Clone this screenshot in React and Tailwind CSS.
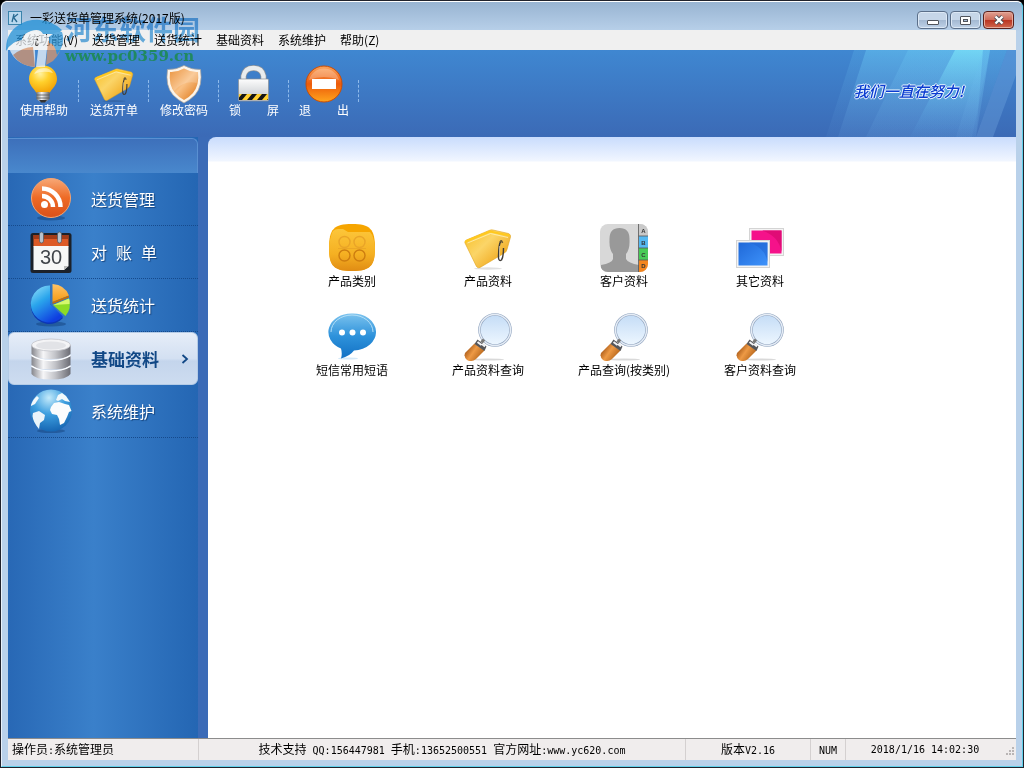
import { useState } from 'react';

const TagIcon = ({ className }) => (
  <svg viewBox="0 0 48 48" className={className} aria-hidden="true">
    <defs>
      <linearGradient id="tagFill" x1="0.1" y1="0.2" x2="0.9" y2="0.9">
        <stop offset="0" stopColor="#f9c63a" />
        <stop offset="0.35" stopColor="#fbd568" />
        <stop offset="1" stopColor="#ee9f0e" />
      </linearGradient>
    </defs>
    <ellipse cx="24" cy="44.5" rx="14" ry="1.2" fill="#000" opacity="0.12" />
    <path d="M1 19 Q0.500 17 2.500 16 L25 6.500 Q27 5.500 29 6 L44.500 9.500 Q47 10.500 46.500 13 L43 25.500 Q42.500 27.500 40.500 29 L16 43.500 Q14 44.500 12.500 42.500 Z" fill="url(#tagFill)" stroke="#e0a21a" strokeWidth="0.6" />
    <path d="M1.500 18.500 Q1.500 17 3.500 16.500 L26 7.500 L45.500 11.500" fill="none" stroke="#ffc91e" strokeWidth="2" />
    <path d="M3.500 19 L26.500 9.500 L44 13.500" fill="none" stroke="#fff2b8" strokeWidth="0.8" />
    <path d="M37 17 Q34.500 20 34.500 34 Q35 37.500 37.500 36 Q39.500 33 39.500 24" fill="none" stroke="#3f3c38" strokeWidth="1.4" />
    <path d="M36 18 Q37.500 15 38.500 19" fill="none" stroke="#6b5a35" strokeWidth="1.6" />
    <path d="M35.500 22 L35.500 32" stroke="#d8d2c0" strokeWidth="0.7" />
  </svg>
);

const BulbIcon = () => (
  <svg viewBox="0 0 40 40" className="size-10" aria-hidden="true">
    <defs>
      <radialGradient id="bulbGlass" cx="0.4" cy="0.3" r="0.7">
        <stop offset="0" stopColor="#fff2a0" />
        <stop offset="0.45" stopColor="#ffd02c" />
        <stop offset="1" stopColor="#f3a408" />
      </radialGradient>
      <linearGradient id="bulbBase" x1="0" x2="1">
        <stop offset="0" stopColor="#777" />
        <stop offset="0.4" stopColor="#f5f5f5" />
        <stop offset="1" stopColor="#666" />
      </linearGradient>
    </defs>
    <path d="M19 1.500 C10.500 1.500 5 7.500 5 15 C5 21 9.500 24 12.500 29 L25.500 29 C28.500 24 33 21 33 15 C33 7.500 27.500 1.500 19 1.500Z" fill="url(#bulbGlass)" />
    <path d="M10 10 Q13 4 20 4 Q26 4 29 9 Q19 6 10 10Z" fill="#fff" opacity="0.5" />
    <path d="M12.500 28 H25.500 V35 Q23 38 19 38 Q15 38 12.500 35Z" fill="url(#bulbBase)" />
    <path d="M12.500 31 H25.500 M12.500 34 H25.500" stroke="#555" strokeWidth="0.8" />
    <path d="M15 36 H23 L21 38.500 H17Z" fill="#333" />
  </svg>
);

const ShieldIcon = () => (
  <svg viewBox="0 0 40 40" className="size-10" aria-hidden="true">
    <defs>
      <linearGradient id="shieldFill" x1="0" y1="0" x2="1" y2="1">
        <stop offset="0" stopColor="#e67d16" />
        <stop offset="0.5" stopColor="#f9c084" />
        <stop offset="1" stopColor="#dc7210" />
      </linearGradient>
    </defs>
    <path d="M20 1.500 Q28 6 36.500 5.500 Q39 22 31 31 Q26 36 20 39 Q14 36 9 31 Q1 22 3.500 5.500 Q12 6 20 1.500Z" fill="#fbf4ea" stroke="#aaa299" strokeWidth="0.7" />
    <path d="M20 4.500 Q27 8.500 34 8 Q35.500 21 29 29 Q25 33.500 20 36 Q15 33.500 11 29 Q4.500 21 6 8 Q13 8.500 20 4.500Z" fill="url(#shieldFill)" />
    <path d="M20 4.500 Q27 8.500 34 8 Q34.500 14 32.500 19 Q20 16 10 27 Q5 20 6 8 Q13 8.500 20 4.500Z" fill="#fff" opacity="0.18" />
  </svg>
);

const LockIcon = () => (
  <svg viewBox="0 0 40 40" className="size-10" aria-hidden="true">
    <defs>
      <linearGradient id="lockBody" x1="0" y1="0" x2="0" y2="1">
        <stop offset="0" stopColor="#fdfdfd" />
        <stop offset="1" stopColor="#bfc3c8" />
      </linearGradient>
      <clipPath id="lockStrip">
        <rect x="5" y="30" width="29" height="6" />
      </clipPath>
    </defs>
    <path d="M9.500 17 V12 Q11 4 19.500 4 Q28 4 29.500 12 V17" fill="none" stroke="#8d9298" strokeWidth="6" />
    <path d="M9.500 17 V12 Q11 4 19.500 4 Q28 4 29.500 12 V17" fill="none" stroke="#e9ecee" strokeWidth="4.500" />
    <rect x="4.500" y="15" width="30" height="22" rx="1" fill="url(#lockBody)" stroke="#8a8f95" strokeWidth="0.7" />
    <g clipPath="url(#lockStrip)">
      <rect x="5" y="30" width="29" height="6" fill="#ffcf2e" />
      <path d="M3 36 L8 30 H13 L8 36Z M13 36 L18 30 H23 L18 36Z M23 36 L28 30 H33 L28 36Z M33 36 L38 30 V36Z" fill="#161616" />
    </g>
  </svg>
);

const ExitIcon = () => (
  <svg viewBox="0 0 40 40" className="size-10" aria-hidden="true">
    <defs>
      <linearGradient id="exitFill" x1="0" y1="0" x2="0" y2="1">
        <stop offset="0" stopColor="#fba45c" />
        <stop offset="0.5" stopColor="#ec5a0a" />
        <stop offset="1" stopColor="#ffa51e" />
      </linearGradient>
    </defs>
    <circle cx="20" cy="20" r="18" fill="url(#exitFill)" stroke="#c94c05" strokeWidth="1" />
    <path d="M5 16 A15.500 15.500 0 0 1 35 16 Q20 10 5 16Z" fill="#fff" opacity="0.25" />
    <rect x="8" y="15" width="24" height="10" fill="#fff" />
  </svg>
);

const RssIcon = () => (
  <svg viewBox="0 0 44 44" className="size-11" aria-hidden="true">
    <defs>
      <linearGradient id="rssFill" x1="0" y1="0" x2="0" y2="1">
        <stop offset="0" stopColor="#f7a876" />
        <stop offset="0.5" stopColor="#ee6a25" />
        <stop offset="1" stopColor="#d9501a" />
      </linearGradient>
    </defs>
    <ellipse cx="22" cy="41" rx="14" ry="2.500" fill="#0c3468" opacity="0.4" />
    <circle cx="22" cy="21" r="19.500" fill="url(#rssFill)" stroke="#f6a470" strokeWidth="1" />
    <circle cx="15.500" cy="27.500" r="3.500" fill="#fff" />
    <path d="M13 19 A11 11 0 0 1 24 30 M13 11.500 A18.500 18.500 0 0 1 31.500 30" fill="none" stroke="#fff" strokeWidth="4.500" />
  </svg>
);

const CalendarIcon = () => (
  <svg viewBox="0 0 44 44" className="size-11" aria-hidden="true">
    <rect x="1.500" y="3" width="41" height="40" rx="2.500" fill="#1c2129" />
    <rect x="4.500" y="5" width="35" height="12" fill="#dd5a27" />
    <rect x="4.500" y="5" width="35" height="4" fill="#a23b18" />
    <path d="M4.500 16 H39.500 V36 L35 40 H4.500Z" fill="#f7f7f7" />
    <path d="M39.500 36 L35 40 V36Z" fill="#b9b9b9" />
    <rect x="10.500" y="2" width="4" height="11" rx="2" fill="#b7c2cd" stroke="#4b5662" strokeWidth="0.7" />
    <rect x="28.500" y="2" width="4" height="11" rx="2" fill="#b7c2cd" stroke="#4b5662" strokeWidth="0.7" />
    <text x="22" y="34" textAnchor="middle" fontSize="20" fill="#41454b" fontFamily="Liberation Sans, sans-serif" className="[text-shadow:none]">30</text>
  </svg>
);

const PieIcon = () => (
  <svg viewBox="0 0 44 44" className="size-11" aria-hidden="true">
    <defs>
      <linearGradient id="pieBlue" x1="0" y1="0" x2="0.6" y2="1">
        <stop offset="0" stopColor="#9be4fb" />
        <stop offset="0.45" stopColor="#2aa5ec" />
        <stop offset="1" stopColor="#0f3ee0" />
      </linearGradient>
      <linearGradient id="pieOrange" x1="0" y1="0" x2="0" y2="1">
        <stop offset="0" stopColor="#ffc468" />
        <stop offset="1" stopColor="#f59a12" />
      </linearGradient>
    </defs>
    <ellipse cx="22" cy="41" rx="15" ry="2.500" fill="#0c3468" opacity="0.4" />
    <path d="M21 21 L21 4 A18.500 18.500 0 1 0 34 35 Z" fill="#0c36b5" />
    <path d="M21 21 L21 2.500 A18.500 18.500 0 1 0 34 33.500 Z" fill="url(#pieBlue)" />
    <path d="M23.500 19 V1 Q36 2 40 12.500Z" fill="url(#pieOrange)" />
    <path d="M23.500 19 V21 L40 14.500 V12.500Z" fill="#c56f08" />
    <path d="M24 22 L40 15.500 Q43 25 36.500 33Z" fill="#8ddc25" />
    <path d="M24 22 L40 15.500 Q41 18 40.500 21Z" fill="#d5f76d" />
  </svg>
);

const DatabaseIcon = () => (
  <svg viewBox="0 0 44 44" className="size-11" aria-hidden="true">
    <defs>
      <linearGradient id="dbFill" x1="0" x2="1">
        <stop offset="0" stopColor="#85868c" />
        <stop offset="0.3" stopColor="#f6f6f8" />
        <stop offset="0.6" stopColor="#c4c5ca" />
        <stop offset="1" stopColor="#6c6d75" />
      </linearGradient>
    </defs>
    <path d="M2.500 30 Q22 39 41.500 30 V37 Q38 42.500 22 42.500 Q6 42.500 2.500 37Z" fill="url(#dbFill)" />
    <path d="M2.500 19 Q22 28 41.500 19 V28 Q38 32.500 22 32.500 Q6 32.500 2.500 28Z" fill="url(#dbFill)" />
    <path d="M2.500 8 H41.500 V17 Q38 22 22 22 Q6 22 2.500 17Z" fill="url(#dbFill)" />
    <path d="M2.500 18.500 Q10 23.500 22 23.500 Q34 23.500 41.500 18.500 M2.500 29 Q10 34 22 34 Q34 34 41.500 29" fill="none" stroke="#fff" strokeWidth="1.500" />
    <ellipse cx="22" cy="8" rx="19.500" ry="6" fill="#f4f4f6" stroke="#c3c4ca" strokeWidth="0.8" />
    <ellipse cx="22" cy="8.500" rx="15" ry="4" fill="#e2e3e7" />
  </svg>
);

const GlobeIcon = () => (
  <svg viewBox="0 0 44 44" className="size-11" aria-hidden="true">
    <defs>
      <radialGradient id="globeFill" cx="0.45" cy="0.2" r="0.85">
        <stop offset="0" stopColor="#c3eafb" />
        <stop offset="0.45" stopColor="#3d9fdf" />
        <stop offset="1" stopColor="#1260ae" />
      </radialGradient>
    </defs>
    <ellipse cx="22" cy="42" rx="14" ry="2" fill="#0c3468" opacity="0.4" />
    <circle cx="22" cy="21.500" r="21" fill="url(#globeFill)" />
    <path d="M22 18 L25 14 L30 13 L36 15 L40 16 L42.500 22 L40 23 L38 28 L35 34 L31 36 L30 30 L28 26 L23 25 L21 21Z" fill="#fafcfd" />
    <path d="M27 11 L29 6 L33 4 L37 7 L41 13 L36 12 L33 10 L29 12Z" fill="#f2f8fb" />
    <path d="M4 24 L10 22 L16 26 L15 31 L11 34 L10 40 Q4 33 3.500 27Z" fill="#eaf4fa" />
    <path d="M2 16 Q4 10 8 7 L10 9 L6 15 L2 17Z" fill="#f2f8fb" />
  </svg>
);

const CategoryIcon = () => (
  <svg viewBox="0 0 48 48" className="size-12" aria-hidden="true">
    <defs>
      <linearGradient id="catFill" x1="0" y1="0" x2="0" y2="1">
        <stop offset="0" stopColor="#fcc63a" />
        <stop offset="0.6" stopColor="#f5b022" />
        <stop offset="1" stopColor="#e08c14" />
      </linearGradient>
    </defs>
    <path d="M24 0 C42 0 47 5 47 24 C47 42 42 47 24 47 C6 47 1 42 1 24 C1 5 6 0 24 0Z" fill="#f6a500" />
    <path d="M3 12 Q4 5 10 5 H15 L20 8 H42 Q46 12 47 24 C47 42 42 47 24 47 C6 47 1 42 1 24 Q1 17 3 12Z" fill="url(#catFill)" />
    <g fill="none" strokeWidth="1.400">
      <g stroke="#e9a428">
        <circle cx="16.500" cy="18" r="5.500" />
        <circle cx="31.500" cy="18" r="5.500" />
      </g>
      <g stroke="#cd7d10">
        <circle cx="16.500" cy="31.500" r="5.500" />
        <circle cx="31.500" cy="31.500" r="5.500" />
      </g>
      <path d="M10 24.500 H38" stroke="#e8a326" strokeWidth="0.800" />
    </g>
  </svg>
);

const ContactIcon = () => (
  <svg viewBox="0 0 48 48" className="size-12" aria-hidden="true">
    <defs>
      <clipPath id="contactClip">
        <rect width="48" height="48" rx="8" />
      </clipPath>
    </defs>
    <g clipPath="url(#contactClip)">
      <rect width="48" height="48" fill="#d8d8d8" />
      <path d="M9.500 16 Q9 4 19.500 4 Q30 4 29.500 16 Q30 25 26 30 V35 Q28 39 39 41 V48 H1 V41 Q12 39 13 35 V30 Q9 25 9.500 16Z" fill="#999" />
      <rect x="39" width="9" height="12" fill="#c9c9c9" />
      <rect x="39" y="12" width="9" height="12" fill="#56b9f2" />
      <rect x="39" y="24" width="9" height="12" fill="#48cb57" />
      <rect x="39" y="36" width="9" height="12" fill="#f3851f" />
      <path d="M38.500 0 V48 M38.500 12 H48 M38.500 24 H48 M38.500 36 H48" stroke="#555" strokeWidth="0.8" />
      <g fontSize="6" fontWeight="bold" fill="#333" textAnchor="middle" fontFamily="Liberation Sans, sans-serif">
        <text x="43.500" y="9">A</text>
        <text x="43.500" y="20.500">B</text>
        <text x="43.500" y="32.500">C</text>
        <text x="43.500" y="43.500">D</text>
      </g>
    </g>
  </svg>
);

const PhotosIcon = () => (
  <svg viewBox="0 0 48 48" className="size-12" aria-hidden="true">
    <defs>
      <linearGradient id="photoBlue" x1="0" y1="0" x2="1" y2="1">
        <stop offset="0" stopColor="#1f68d8" />
        <stop offset="1" stopColor="#3e93fb" />
      </linearGradient>
    </defs>
    <rect x="13.500" y="4.500" width="34" height="27" fill="#f4f4f4" stroke="#d4d4d4" />
    <rect x="15.500" y="6.500" width="30" height="23" fill="#f5128a" />
    <path d="M26 6.500 H45.500 V28 Q43 12 26 6.500Z" fill="#e00c76" />
    <rect x="0.500" y="16.500" width="33" height="27" fill="#f4f4f4" stroke="#d4d4d4" />
    <rect x="2.500" y="18.500" width="29" height="23" fill="url(#photoBlue)" />
    <path d="M13 18.500 H31.500 V38 Q29 23 13 18.500Z" fill="#1f63d2" opacity="0.5" />
  </svg>
);

const ChatIcon = () => (
  <svg viewBox="0 0 48 48" className="size-12" aria-hidden="true">
    <defs>
      <linearGradient id="chatFill" x1="0" y1="0" x2="0" y2="1">
        <stop offset="0" stopColor="#7cc3ee" />
        <stop offset="0.5" stopColor="#2e92db" />
        <stop offset="1" stopColor="#1271c4" />
      </linearGradient>
    </defs>
    <ellipse cx="20" cy="45.500" rx="10" ry="1" fill="#2e92db" opacity="0.2" />
    <path d="M24 0.500 A23 18.500 0 0 1 26 37.500 Q22 43 13 45.500 Q14.500 41 13 35.500 A23 18.500 0 0 1 24 0.500Z" fill="url(#chatFill)" />
    <path d="M3 19 A21 17 0 0 1 45 19" fill="none" stroke="#b5e0f7" strokeWidth="1" />
    <circle cx="14" cy="19.500" r="3" fill="#fff" />
    <circle cx="24.500" cy="19.500" r="3" fill="#fff" />
    <circle cx="35" cy="19.500" r="3" fill="#fff" />
  </svg>
);

const SearchIcon = () => (
  <svg viewBox="0 0 48 48" className="size-12" aria-hidden="true">
    <defs>
      <linearGradient id="lensFill" x1="0" y1="0" x2="0" y2="1">
        <stop offset="0" stopColor="#c4dcf6" />
        <stop offset="1" stopColor="#eef7ff" />
      </linearGradient>
      <linearGradient id="handleFill" x1="0" y1="0.200" x2="1" y2="0.800">
        <stop offset="0" stopColor="#8f4208" />
        <stop offset="0.45" stopColor="#ee9a45" />
        <stop offset="1" stopColor="#a5560f" />
      </linearGradient>
    </defs>
    <ellipse cx="24" cy="46.500" rx="16" ry="1" fill="#000" opacity="0.15" />
    <circle cx="31" cy="17" r="15.500" fill="url(#lensFill)" stroke="#93a6c0" strokeWidth="2.600" />
    <circle cx="31" cy="17" r="15.500" fill="none" stroke="#e6edf6" strokeWidth="1.400" />
    <path d="M10.500 30.500 L20.500 37.500 L12 46 Q7.500 49.500 3 47 Q-1 43 1.500 39.500Z" fill="url(#handleFill)" />
    <path d="M13.500 26.500 L22.500 33.500 L20.500 38 L10.500 31 Z" fill="#55565a" />
    <path d="M13.500 29 L17.500 32 M18 31 L21 33.500" stroke="#f4f4f6" strokeWidth="2" />
    <path d="M17.500 29.500 L20 26.500" stroke="#777" strokeWidth="3" />
  </svg>
);

const isLatin = /([\x20-\x7e]+)/;

// half-width runs are set in a fixed 6px pitch beside the 12px ideographs
const FixedText = ({ text }) => (
  <span className="whitespace-pre">
    {text.split(isLatin).map((part, index) =>
      isLatin.test(part) ? (
        <span key={index} className="font-['DejaVu_Sans_Mono',monospace] text-[10px]">
          {part}
        </span>
      ) : (
        part
      )
    )}
  </span>
);

const menus = ['系统功能(V)', '送货管理', '送货统计', '基础资料', '系统维护', '帮助(Z)'];

const tools = [
  { label: ['使用帮助'], icon: <BulbIcon /> },
  { label: ['送货开单'], icon: <TagIcon className="size-10" /> },
  { label: ['修改密码'], icon: <ShieldIcon /> },
  { label: ['锁', '屏'], icon: <LockIcon /> },
  { label: ['退', '出'], icon: <ExitIcon /> },
];

const sections = [
  { id: 'delivery', label: ['送货管理'], icon: <RssIcon /> },
  { id: 'statement', label: ['对', '账', '单'], icon: <CalendarIcon /> },
  { id: 'stats', label: ['送货统计'], icon: <PieIcon /> },
  { id: 'base', label: ['基础资料'], icon: <DatabaseIcon /> },
  { id: 'system', label: ['系统维护'], icon: <GlobeIcon /> },
];

const shortcuts = [
  { label: '产品类别', icon: <CategoryIcon /> },
  { label: '产品资料', icon: <TagIcon className="size-12" /> },
  { label: '客户资料', icon: <ContactIcon /> },
  { label: '其它资料', icon: <PhotosIcon /> },
  { label: '短信常用短语', icon: <ChatIcon /> },
  { label: '产品资料查询', icon: <SearchIcon /> },
  { label: '产品查询(按类别)', icon: <SearchIcon /> },
  { label: '客户资料查询', icon: <SearchIcon /> },
];

const TitleBar = () => (
  <header className="flex h-7 shrink-0 items-center justify-between">
    <div className="flex items-center gap-2 pt-1">
      <svg viewBox="0 0 14 14" className="size-3.5" aria-hidden="true">
        <rect x="0.500" y="0.500" width="13" height="13" fill="#b8d8ee" stroke="#3b83ab" />
        <path d="M4 11 L6 3 M5 7 L10 3 M6 7 L9 11" stroke="#286a92" strokeWidth="1.300" fill="none" />
      </svg>
      <h1 className="text-xs text-black">一彩送货单管理系统(2017版)</h1>
    </div>
    <div className="flex gap-0.5 pt-2 pr-0.5">
      <button aria-label="最小化" className="flex h-[18px] w-[31px] items-center justify-center rounded-sm border border-[#5b6f89] bg-[linear-gradient(to_bottom,#c6d6e8_50%,#a3b8d1_50%,#bfd2e8)] shadow-[inset_0_0_0_1px_#dce8f5]">
        <span className="mt-1 h-[5px] w-3 rounded-[1px] border border-[#50545c] bg-white" />
      </button>
      <button aria-label="最大化" className="flex h-[18px] w-[31px] items-center justify-center rounded-sm border border-[#5b6f89] bg-[linear-gradient(to_bottom,#c6d6e8_50%,#a3b8d1_50%,#bfd2e8)] shadow-[inset_0_0_0_1px_#dce8f5]">
        <span className="flex h-[9px] w-[11px] items-center justify-center rounded-[1px] border border-[#50545c] bg-white">
          <span className="h-[3px] w-[5px] border border-[#50545c] bg-[#a5bad3]" />
        </span>
      </button>
      <button aria-label="关闭" className="flex h-[18px] w-[31px] items-center justify-center rounded-sm border border-[#59201c] bg-[linear-gradient(to_bottom,#dfa193,#cf6a58_50%,#b93220_50%,#d0674f)] shadow-[inset_0_0_0_1px_#e6aa9c]">
        <svg viewBox="0 0 12 10" className="h-2.5 w-3" aria-hidden="true">
          <path d="M2.500 1.500 L9.500 8.500 M9.500 1.500 L2.500 8.500" stroke="#4b4f58" strokeWidth="4" />
          <path d="M2.500 1.500 L9.500 8.500 M9.500 1.500 L2.500 8.500" stroke="#fff" strokeWidth="2.400" />
        </svg>
      </button>
    </div>
  </header>
);

const Toolbar = () => (
  <div className="relative flex h-[87px] shrink-0 bg-linear-to-b from-[#3f87d1] to-[#3b6ab6]">
    <svg viewBox="0 0 190 87" className="absolute top-0 right-0 h-full" aria-hidden="true">
      <defs>
        <linearGradient id="beamBright" x1="0" y1="0" x2="0" y2="1">
          <stop offset="0" stopColor="#7de6fa" />
          <stop offset="1" stopColor="#5a9fe0" stopOpacity="0.1" />
        </linearGradient>
        <linearGradient id="beamSoft" x1="0" y1="0" x2="0" y2="1">
          <stop offset="0" stopColor="#68c6f2" stopOpacity="0.7" />
          <stop offset="1" stopColor="#6aa2de" stopOpacity="0.25" />
        </linearGradient>
      </defs>
      <path d="M28 0 H40 L12 87 H0Z" fill="url(#beamSoft)" opacity="0.3" />
      <path d="M40 0 H164 L150 87 H12Z" fill="url(#beamSoft)" opacity="0.8" />
      <path d="M82 0 H164 L146 87 H40Z" fill="url(#beamSoft)" opacity="0.5" />
      <path d="M129 0 H157 L150 87 H84Z" fill="url(#beamBright)" opacity="0.65" />
      <path d="M157 0 H181 L150 87 H130Z" fill="url(#beamSoft)" opacity="0.5" />
      <path d="M181 0 H190 V25 L167 87 H150Z" fill="#7fb4e8" opacity="0.3" />
    </svg>
    <div className="flex pl-px">
      {tools.map((tool) => (
        <button key={tool.label.join('')} className="flex items-start text-white">
          <span className="flex w-[70px] flex-col items-center pt-3.5">
            {tool.icon}
            <span className="flex w-[50px] justify-between text-xs leading-3">
              {tool.label.map((word) => (
                <span key={word} className="only:mx-auto">{word}</span>
              ))}
            </span>
          </span>
          <span className="mt-[30px] -ml-px h-[22px] border-l border-dashed border-[#8fbaea]" />
        </button>
      ))}
    </div>
    <p className="relative mr-[52px] mb-1 ml-auto self-center text-[15px] font-medium text-[#0a3bd0] italic [text-shadow:1px_0_#e8f4ff,-1px_0_#e8f4ff,0_1px_#e8f4ff,0_-1px_#e8f4ff]">
      我们一直在努力!
    </p>
  </div>
);

const Sidebar = ({ active, onSelect }) => (
  <nav className="w-[190px] shrink-0 bg-linear-to-r from-[#2868b5] via-[#3a80ca] via-45% to-[#2466b3]">
    <div className="mt-px h-[35px] rounded-tr-md border-t border-r border-[#5a90d2] bg-linear-to-b from-[#3d70bb] to-[#4988cd]" />
    {sections.map((section) => {
      const selected = section.id === active;
      return (
        <button
          key={section.id}
          onClick={() => onSelect(section.id)}
          className={
            selected
              ? 'flex h-[53px] w-full items-center rounded-md border border-[#b4cbe6] bg-[linear-gradient(to_bottom,#e6edf8,#d3e0f2_50%,#c4d5ec_55%,#cddcf0)] pl-5 text-[17px] font-bold text-[#114886]'
              : 'flex h-[53px] w-full items-center border-b border-dotted border-[#164a8c] pl-[21px] text-base text-white [text-shadow:1px_1px_1px_#17457e]'
          }
        >
          {section.icon}
          <span className={selected ? 'ml-4 w-[72px]' : 'ml-[18px] flex w-[66px] justify-between'}>
            {section.label.map((word) => (
              <span key={word}>{word}</span>
            ))}
          </span>
          {selected && (
            <svg viewBox="0 0 8 10" className="ml-5 h-2.5 w-2" aria-hidden="true">
              <path d="M1.500 1 L6 5 L1.500 9" fill="none" stroke="#114886" strokeWidth="1.800" />
            </svg>
          )}
        </button>
      );
    })}
  </nav>
);

const StatusBar = () => (
  <footer className="flex h-[22px] shrink-0 items-stretch border-t border-[#8c8c8c] bg-[#f0eded] text-xs leading-5 text-black">
    <div className="w-[191px] border-r border-[#d4d0d0] pl-1">
      <FixedText text="操作员:系统管理员" />
    </div>
    <div className="flex-1 border-r border-[#d4d0d0] text-center">
      <FixedText text="技术支持 QQ:156447981 手机:13652500551 官方网址:www.yc620.com" />
    </div>
    <div className="w-[125px] border-r border-[#d4d0d0] text-center">
      <FixedText text="版本V2.16" />
    </div>
    <div className="w-[35px] border-r border-[#d4d0d0] text-center">
      <FixedText text="NUM" />
    </div>
    <div className="flex w-[170px] items-end">
      <div className="flex-1 text-center">
        <FixedText text="2018/1/16 14:02:30" />
      </div>
      <svg viewBox="0 0 12 12" className="mb-0.5 size-3" aria-hidden="true">
        <path d="M8 1h2v2h-2z M5 4h2v2h-2z M8 4h2v2h-2z M2 7h2v2h-2z M5 7h2v2h-2z M8 7h2v2h-2z" fill="#b9b5b5" />
      </svg>
    </div>
  </footer>
);

const Watermark = () => (
  <>
    <svg viewBox="0 0 60 50" className="pointer-events-none absolute top-4 left-1 w-[60px] opacity-75" aria-hidden="true">
      <path d="M4 31 Q16 17 27 23 Q31 26 30 50 Q10 48 4 31Z" fill="#eef3f7" />
      <path d="M8 38 Q18 30 28 30 L30 50 Q15 49 8 38Z" fill="#d8946a" />
      <path d="M1 34 Q0 12 22 4 Q42 -1 57 13 L53 17 H38 Q35 11 26 14 Q17 17 17 23 Q7 24 1 34Z" fill="#1f8fd6" />
      <path d="M17 23 Q22 12 34 15 L30 27 Q24 21 17 23Z" fill="#f3f7fa" />
      <path d="M35 18 H53 Q55 22 54 27 L44 28 L43 22 L40 50 H31 Z" fill="#f0f4f8" />
      <path d="M43 24 L54 20 Q60 32 48 44 L41 48Z" fill="#d8946a" />
      <path d="M44 20 Q50 14 57 15 Q61 26 52 38 Q50 26 44 26Z" fill="#2f97da" />
    </svg>
    <div className="pointer-events-none absolute top-3.5 left-16 flex flex-col">
      <span className="text-[27px] leading-7 font-bold text-[#2a93dc]/70 mix-blend-multiply">河东软件园</span>
      <span className="font-['DejaVu_Serif',serif] text-[15px] leading-[26px] font-bold text-[#1b8a4c]/85">www.pc0359.cn</span>
    </div>
  </>
);

export default function App() {
  const [active, setActive] = useState('base');

  return (
    <div className="h-screen min-h-[560px] bg-black font-['Noto_Sans_CJK_SC',sans-serif]">
      <div className="relative flex h-full flex-col rounded-t-lg border border-[#20222c] bg-[#b9d1ea]">
        <div className="flex min-h-0 flex-1 flex-col rounded-t-md border border-t-white border-r-[#5fd0ea] border-b-[#5fd0ea] border-l-[#e8f1fa] bg-[linear-gradient(to_bottom,#98b4d2_0,#b9d1ea_30px)] px-1.5 pb-1.5">
          <TitleBar />
          <div role="menubar" className="flex h-5 shrink-0 items-center gap-3.5 bg-[#f0f0f0] pl-[7px] text-xs text-black">
            {menus.map((menu) => (
              <button key={menu} role="menuitem">{menu}</button>
            ))}
          </div>
          <Toolbar />
          <div className="flex min-h-0 flex-1 bg-[#3b6bb7]">
            <Sidebar active={active} onSelect={setActive} />
            <main className="ml-2.5 flex-1 rounded-tl-lg bg-white bg-[linear-gradient(to_bottom,#c9dcfd_0,#f1f6ff_24px,#fff_25px)] pt-[87px] pl-[76px]">
              <div className="grid grid-cols-[repeat(4,136px)] gap-y-[23px]">
                {shortcuts.map((item) => (
                  <button key={item.label} className="flex flex-col items-center text-xs leading-[18px] text-black">
                    {item.icon}
                    <span>{item.label}</span>
                  </button>
                ))}
              </div>
            </main>
          </div>
          <StatusBar />
        </div>
        <Watermark />
      </div>
    </div>
  );
}
